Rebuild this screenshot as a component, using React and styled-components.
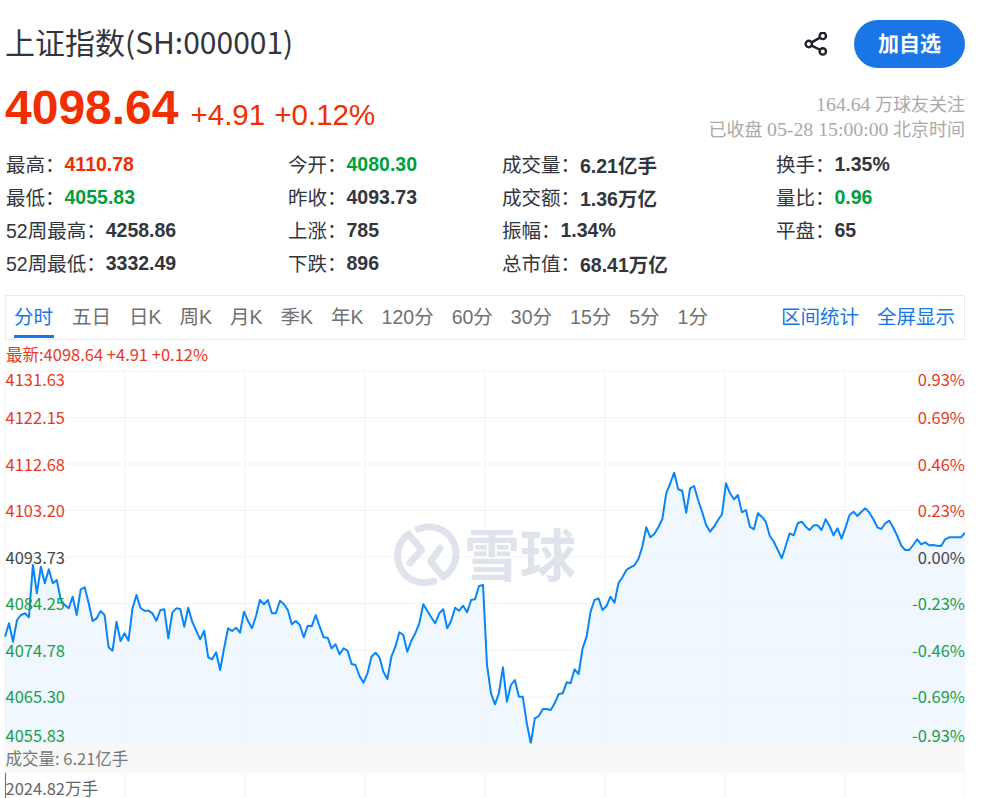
import React from 'react'
import styled, { createGlobalStyle } from 'styled-components'

const CJK = '"Noto Sans CJK SC", sans-serif'
const ARIAL = '"Liberation Sans", "Noto Sans CJK SC", sans-serif'
const UP = '#f22e00'
const DOWN = '#00a03c'

const toneColor = { up: UP, down: DOWN, plain: '#33353c' }
const axisColor = { up: '#e8391f', down: '#1a9e4a', flat: '#45474d' }

const GlobalStyle = createGlobalStyle`
    html, body {
        margin: 0;
        padding: 0;
        background: #fff;
    }
`

const Page = styled.div`
    width: 960px;
    height: 798px;
    padding-left: 5px;
    overflow: hidden;
    font-family: ${CJK};
`

const Header = styled.div`
    box-sizing: border-box;
    height: 68px;
    padding-top: 19px;
    display: flex;
    align-items: flex-start;
    justify-content: space-between;
`

const Title = styled.h1`
    margin: 0;
    font-size: 30px;
    font-weight: 400;
    line-height: 44px;
    color: #33353c;
`

const Actions = styled.div`
    margin-top: 1px;
    display: flex;
    align-items: center;
    gap: 26px;
`

const ShareIcon = styled.svg`
    width: 24px;
    height: 24px;
    display: block;
`

const FollowButton = styled.button`
    width: 111px;
    height: 48px;
    border: 0;
    border-radius: 24px;
    background: #1a76e6;
    color: #fff;
    font-family: ${CJK};
    font-size: 21px;
    font-weight: 700;
    padding: 0 0 4px;
`

const QuoteRow = styled.div`
    height: 64px;
    margin: 10px 0 5px;
    display: flex;
    justify-content: space-between;
`

const Price = styled.div`
    display: flex;
    align-items: flex-start;
    gap: 12px;
    color: ${UP};
    font-family: ${ARIAL};
`

const Current = styled.span`
    font-size: 48px;
    line-height: 60px;
    font-weight: 700;
`

const Change = styled.span`
    margin-top: 17px;
    font-size: 29.5px;
    line-height: 40px;
    word-spacing: 1px;
`

const Meta = styled.div`
    align-self: flex-end;
    text-align: right;
    color: #aaa;
    font-size: 18px;
    line-height: 24px;
    font-family: "Liberation Serif", "Noto Sans CJK SC", serif;
    span {
        font-size: 19.8px;
    }
`

const Stats = styled.div`
    display: grid;
    grid-template-columns: 282px 214px 274px 1fr;
    grid-auto-rows: 33px;
    padding-left: 1px;
    height: 132px;
`

const Stat = styled.div`
    display: flex;
    align-items: center;
    font-size: 19.5px;
    color: #33353c;
    white-space: nowrap;
`

const StatLabel = styled.span`
    font-family: ${ARIAL};
`

const StatValue = styled.span`
    padding-top: 2px;
    font-family: ${ARIAL};
    font-weight: 700;
    color: ${(p) => toneColor[p.$tone || 'plain']};
`

const Tabs = styled.div`
    margin-top: 16px;
    height: 45px;
    border: 1px solid #ebebeb;
    display: flex;
    justify-content: space-between;
    padding: 0 9px 0 8px;
    box-sizing: border-box;
    width: 960px;
`

const TabGroup = styled.div`
    display: flex;
    gap: 18px;
`

const Tab = styled.div`
    height: 42px;
    box-sizing: border-box;
    line-height: 43px;
    font-family: ${ARIAL};
    font-size: 19.5px;
    white-space: nowrap;
    min-width: ${(p) => (p.$active ? '40px' : '0')};
    color: ${(p) => (p.$active || p.$link ? '#1a76e6' : '#707070')};
    border-bottom: 3px solid ${(p) => (p.$active ? '#1a76e6' : 'transparent')};
`

const Latest = styled.div`
    height: 31px;
    line-height: 28px;
    font-size: 16.5px;
    color: #e8391f;
    padding-left: 1px;
    white-space: nowrap;
`

const ChartSvg = styled.svg`
    display: block;
    width: 961px;
    height: 427px;
    overflow: visible;
    text {
        font-family: ${CJK};
        font-size: 16.5px;
    }
`

const PERIODS = ['五日', '日K', '周K', '月K', '季K', '年K', '120分', '60分', '30分', '15分', '5分', '1分']

const STATS = [
    ['最高：', '4110.78', 'up'], ['今开：', '4080.30', 'down'], ['成交量：', '6.21亿手'], ['换手：', '1.35%'],
    ['最低：', '4055.83', 'down'], ['昨收：', '4093.73'], ['成交额：', '1.36万亿'], ['量比：', '0.96', 'down'],
    ['52周最高：', '4258.86'], ['上涨：', '785'], ['振幅：', '1.34%'], ['平盘：', '65'],
    ['52周最低：', '3332.49'], ['下跌：', '896'], ['总市值：', '68.41万亿'],
]

const H_LINES = [371, 417.5, 464, 510.5, 557, 603.5, 650, 697, 743]
const V_LINES = [5, 125, 245, 365, 485, 605, 725, 845, 965]

const LEFT_AXIS = [
    ['4131.63', 386, 'up'], ['4122.15', 424, 'up'], ['4112.68', 471, 'up'], ['4103.20', 517, 'up'], ['4093.73', 564, 'flat'],
    ['4084.25', 610, 'down'], ['4074.78', 657, 'down'], ['4065.30', 703, 'down'], ['4055.83', 742, 'down'],
]
const RIGHT_AXIS = [
    ['0.93%', 386, 'up'], ['0.69%', 424, 'up'], ['0.46%', 471, 'up'], ['0.23%', 517, 'up'], ['0.00%', 564, 'flat'],
    ['-0.23%', 610, 'down'], ['-0.46%', 657, 'down'], ['-0.69%', 703, 'down'], ['-0.93%', 742, 'down'],
]

// y of the price line, one value per minute, in page pixels
const LINE = [
    636.7, 623.3, 641.7, 620, 615, 613.3, 617.3, 565, 593.3, 566.7, 583.3, 569.3, 583.3, 580, 600, 605, 608.3, 596.7, 615, 589.3,
    587.3, 603.3, 621, 618.3, 611, 615, 647.3, 650.7, 621.7, 641, 633.3, 640.7, 608.3, 595, 607.7, 610.7, 610.7, 613.3, 620.7, 610,
    609.3, 638.3, 612.7, 608.3, 609, 626.7, 607.7, 621.7, 630.7, 639.3, 630.7, 657.3, 659.3, 652.3, 670, 648.3, 628.3, 631, 627.7, 632.7,
    611.7, 621, 628.3, 616, 600, 604.3, 600, 613.3, 613.3, 600.7, 604, 610, 624.3, 621, 625, 637.3, 625.7, 626.3, 615, 626.7,
    637.3, 637.7, 648.3, 644.3, 654.3, 648.3, 650.7, 664, 665, 676, 682.7, 673.3, 656.7, 652.7, 657.3, 671.7, 679, 656.7, 646.7, 632.3,
    635, 651.7, 641, 633.3, 623.3, 604.3, 610.7, 617.3, 623.3, 613.3, 609.3, 628.3, 621, 607.7, 610.7, 605.7, 612.3, 600, 599.3, 586,
    585, 665, 693.3, 704.3, 693, 667.3, 701.7, 685, 680, 696.7, 696.7, 723.3, 743.3, 718.3, 716, 709, 709, 710, 703.3, 694,
    693.3, 682.3, 683.3, 669.3, 674, 648.3, 636.7, 611.7, 600, 598.3, 610, 606, 596.7, 602.7, 583.3, 577.3, 570, 567.3, 565.3, 559,
    546.7, 527.3, 537.3, 534, 527.3, 519.3, 493.3, 483.3, 472.7, 489.3, 490.7, 512.7, 488.3, 486, 500, 511.7, 525, 531.7, 526.7, 520,
    514.3, 483.3, 493.3, 499.3, 495, 512.3, 510, 526.7, 529.3, 513.3, 516.7, 521.7, 536, 541.7, 550, 558.3, 546, 533.3, 535.3, 523.3,
    521.7, 526.7, 530, 525.3, 525.3, 530, 519.3, 526, 535.3, 528.3, 538.7, 527.7, 515, 511.7, 516, 511.7, 508.3, 512.7, 519.3, 527.3,
    529, 523.3, 520.7, 527.7, 536, 545.7, 550, 550, 545, 539.3, 544.3, 542.3, 545.3, 545, 545.7, 546, 539.3, 537.3, 537.3, 537.3,
    537.3, 532.7,
]

const linePoints = LINE.map((y, i) => `${(5 + (i * 960) / (LINE.length - 1)).toFixed(1)},${y}`).join(' ')

function PriceChart() {
    return (
        <ChartSvg viewBox="5 371 961 427">
            {H_LINES.map((y) => <line key={y} x1="5" x2="965" y1={y} y2={y} stroke="#f2f3f5" />)}
            {V_LINES.map((x) => <line key={x} x1={x} x2={x} y1="371" y2="798" stroke="#f2f3f5" />)}

            <g fill="none" stroke="#dfe4ec" strokeWidth="7" strokeLinecap="round" strokeLinejoin="round">
                <path d="M434 581 A27 27 0 0 1 408.5 534 L421.5 550 L410 563" />
                <path d="M418.3 529 A27 27 0 0 1 443.3 576.7 L430.7 561.7 L440 548.3" />
            </g>
            <text x="464" y="576" fill="#dfe4ec" style={{ fontSize: 56, fontWeight: 700 }}>雪球</text>

            <polygon points={`5,743 ${linePoints} 965,743`} fill="#ebf4fe" fillOpacity="0.75" />
            <polyline points={linePoints} fill="none" stroke="#0a85f7" strokeWidth="2" strokeLinejoin="round" />

            <rect x="5" y="743.5" width="960" height="29.5" fill="#f8f8f8" />
            <line x1="5.5" x2="5.5" y1="773" y2="798" stroke="#1a9e4a" />

            {LEFT_AXIS.map(([t, y, tone]) => <text key={t} x="5.5" y={y} fill={axisColor[tone]}>{t}</text>)}
            {RIGHT_AXIS.map(([t, y, tone]) => <text key={t} x="965" y={y} textAnchor="end" fill={axisColor[tone]}>{t}</text>)}

            <text x="5.5" y="765" fill="#777">成交量: 6.21亿手</text>
            <text x="5.5" y="795" fill="#666">2024.82万手</text>
        </ChartSvg>
    )
}

function App() {
    return (
        <Page>
            <GlobalStyle />
            <Header>
                <Title>上证指数(SH:000001)</Title>
                <Actions>
                    <ShareIcon viewBox="0 0 24 24" fill="none" stroke="#1d2129" strokeWidth="2.4">
                        <circle cx="4.8" cy="12" r="3.2" />
                        <circle cx="18.8" cy="3.9" r="3.2" />
                        <circle cx="18.8" cy="19.4" r="3.2" />
                        <path d="M7.6 10.4 L16 5.6 M7.6 13.6 L16 17.8" />
                    </ShareIcon>
                    <FollowButton>加自选</FollowButton>
                </Actions>
            </Header>

            <QuoteRow>
                <Price>
                    <Current>4098.64</Current>
                    <Change>+4.91 +0.12%</Change>
                </Price>
                <Meta>
                    <div><span>164.64</span> 万球友关注</div>
                    <div>已收盘 <span>05-28 15:00:00</span> 北京时间</div>
                </Meta>
            </QuoteRow>

            <Stats>
                {STATS.map(([label, value, tone]) => (
                    <Stat key={label}>
                        <StatLabel>{label}</StatLabel>
                        <StatValue $tone={tone}>{value}</StatValue>
                    </Stat>
                ))}
            </Stats>

            <Tabs>
                <TabGroup>
                    <Tab $active>分时</Tab>
                    {PERIODS.map((p) => <Tab key={p}>{p}</Tab>)}
                </TabGroup>
                <TabGroup>
                    <Tab $link>区间统计</Tab>
                    <Tab $link>全屏显示</Tab>
                </TabGroup>
            </Tabs>

            <Latest>最新:4098.64 +4.91 +0.12%</Latest>
            <PriceChart />
        </Page>
    )
}

export default App
